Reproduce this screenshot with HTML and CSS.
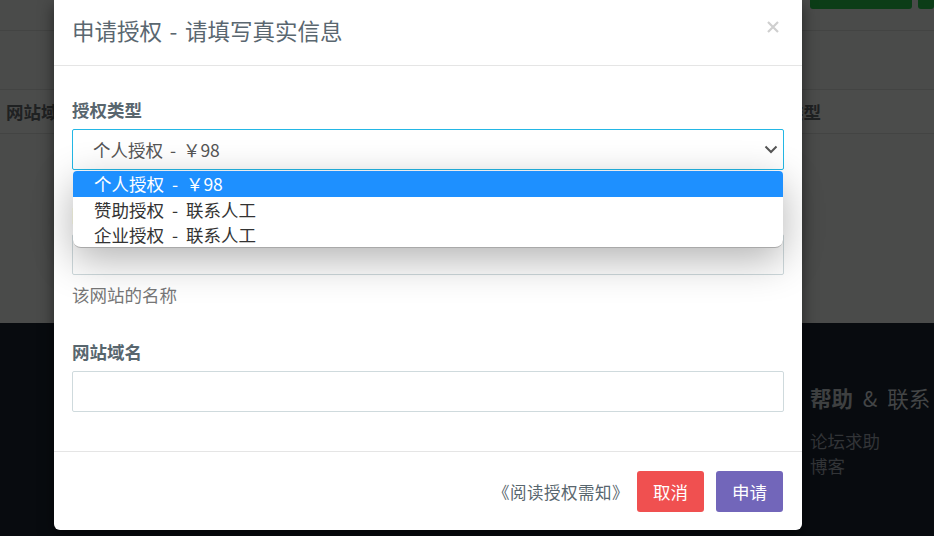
FILE: index.html
```html
<!DOCTYPE html>
<html lang="zh-CN">
<head>
<meta charset="utf-8">
<title>申请授权</title>
<link rel="stylesheet" href="styles.css">
</head>
<body>
<div class="page">
  <div class="topbar">
    <div class="top-actions">
      <span class="green-btn wide"></span>
      <span class="green-btn"></span>
    </div>
  </div>
  <div class="hero"></div>
  <div class="table-head">
    <span class="th first">网站域名</span>
    <span class="th last">类型</span>
  </div>
  <div class="table-body"></div>
  <footer class="footer">
    <div class="footer-col">
      <div class="footer-title"><b>帮助</b> &amp; 联系</div>
      <div class="footer-links">
        <span>论坛求助</span>
        <span>博客</span>
      </div>
    </div>
  </footer>
</div>

<div class="modal">
  <div class="modal-header">
    <h4 class="modal-title">申请授权 - 请填写真实信息</h4>
    <span class="close">
      <svg width="12" height="12" viewBox="0 0 12 12"><path d="M1 1L11 11M11 1L1 11" stroke="#cfcfcf" stroke-width="2.2" fill="none"/></svg>
    </span>
  </div>
  <div class="modal-body">
    <div class="group">
      <label class="label">授权类型</label>
      <div class="select-wrap">
        <div class="control select">
          <span>个人授权 - ￥98</span>
          <svg class="chev" width="14" height="9" viewBox="0 0 14 9"><path d="M1.5 1.5L7 7L12.5 1.5" stroke="#555" stroke-width="2" fill="none"/></svg>
        </div>
        <ul class="dropdown">
          <li class="active">个人授权 - ￥98</li>
          <li>赞助授权 - 联系人工</li>
          <li>企业授权 - 联系人工</li>
        </ul>
      </div>
    </div>
    <div class="group">
      <label class="label">网站名称</label>
      <div class="control"></div>
      <p class="hint">该网站的名称</p>
    </div>
    <div class="group last">
      <label class="label">网站域名</label>
      <div class="control"></div>
    </div>
  </div>
  <div class="modal-footer">
    <span class="notice">《阅读授权需知》</span>
    <span class="btn danger">取消</span>
    <span class="btn primary">申请</span>
  </div>
</div>
</body>
</html>
```

FILE: styles.css
```css
* { box-sizing: border-box; }
html, body { margin: 0; padding: 0; }
body {
  width: 934px;
  height: 536px;
  overflow: hidden;
  background: #080b0f;
  font-family: "Noto Sans CJK SC", "Noto Sans", sans-serif;
  position: relative;
}

.page { display: flex; flex-direction: column; height: 536px; }

.topbar {
  height: 31px;
  background: #4a4b4a;
  border-bottom: 1px solid #434443;
  display: flex;
  justify-content: flex-end;
}
.top-actions { display: flex; gap: 6px; align-items: flex-start; }
.green-btn {
  display: block;
  width: 16px;
  height: 9px;
  background: #0c3d17;
  border-radius: 0 0 3px 3px;
}
.green-btn.wide { width: 102px; }

.hero {
  height: 59px;
  background: #4a4b4a;
  border-bottom: 1px solid #434443;
}

.table-head {
  height: 44px;
  background: #4b4c4b;
  border-bottom: 1px solid #434443;
  display: flex;
  justify-content: space-between;
  align-items: center;
}
.th {
  font-size: 17.5px;
  font-weight: 700;
  color: #1f2122;
  line-height: 24px;
}
.th.first { padding-left: 6px; }
.th.last { width: 148px; }

.table-body { height: 189px; background: #4a4b4a; }

.footer {
  flex: 1;
  background: #080b0f;
  display: flex;
  justify-content: flex-end;
}
.footer-col { width: 124px; padding-top: 61px; }
.footer-title {
  font-size: 21.5px;
  line-height: 28px;
  color: #434546;
  word-spacing: 5px;
  white-space: nowrap;
}
.footer-title b { font-weight: 700; color: #3e4041; }
.footer-links {
  margin-top: 16px;
  display: flex;
  flex-direction: column;
  font-size: 17.5px;
  line-height: 25px;
  color: #323437;
}

/* modal */
.modal {
  position: absolute;
  left: 54px;
  top: 0;
  width: 748px;
  background: #fff;
  border-radius: 0 0 6px 6px;
  box-shadow: 0 5px 15px rgba(0, 0, 0, 0.5);
}
.modal-header {
  height: 66px;
  border-bottom: 1px solid #e5e5e5;
  display: flex;
  align-items: center;
  justify-content: space-between;
  padding: 0 23px 6px 18px;
}
.modal-title {
  margin: 0;
  font-size: 22.5px;
  font-weight: 400;
  color: #5a6770;
  line-height: 30px;
  word-spacing: 2.5px;
}
.close { display: flex; margin-top: -6px; }

.modal-body { padding: 32px 18px 39px; }
.group { margin-bottom: 33px; }
.group.last { margin-bottom: 0; }
.label {
  display: block;
  font-size: 17.5px;
  font-weight: 700;
  color: #58666e;
  line-height: 24px;
  margin-bottom: 7px;
}
.control {
  height: 41px;
  border: 1px solid #cfdadd;
  border-radius: 2px;
  background: #fff;
}
.select-wrap { position: relative; }
.select {
  border-color: #23b7e5;
  display: flex;
  align-items: center;
  justify-content: space-between;
  padding: 0 5px 0 20px;
  font-size: 17.5px;
  color: #555;
  word-spacing: 3px;
}
.hint {
  margin: 8px 0 0;
  font-size: 17.5px;
  line-height: 24px;
  color: #777;
}

.dropdown {
  position: absolute;
  left: 1px;
  right: 1px;
  top: 42px;
  margin: 0;
  padding: 0;
  list-style: none;
  background: #fff;
  border-radius: 4px 4px 8px 8px;
  border-bottom: 1px solid #a9a9a9;
  box-shadow: 0 12px 40px rgba(0, 0, 0, 0.3);
  overflow: hidden;
  z-index: 2;
}
.dropdown li {
  height: 25px;
  line-height: 25px;
  padding-left: 21px;
  font-size: 17.5px;
  color: #333;
  word-spacing: 4px;
}
.dropdown li.active { background: #1e90ff; color: #fff; height: 26px; }

.modal-footer {
  border-top: 1px solid #e5e5e5;
  padding: 19px 19px 18px;
  display: flex;
  justify-content: flex-end;
  align-items: center;
  gap: 12px;
}
.notice {
  font-size: 16.5px;
  letter-spacing: 0.5px;
  color: #58666e;
  margin-right: -4px;
}
.btn {
  display: flex;
  align-items: center;
  justify-content: center;
  width: 67px;
  height: 41px;
  border-radius: 3px;
  font-size: 17.5px;
  color: #fff;
}
.btn.danger { background: #f05050; }
.btn.primary { background: #7266ba; }
```
